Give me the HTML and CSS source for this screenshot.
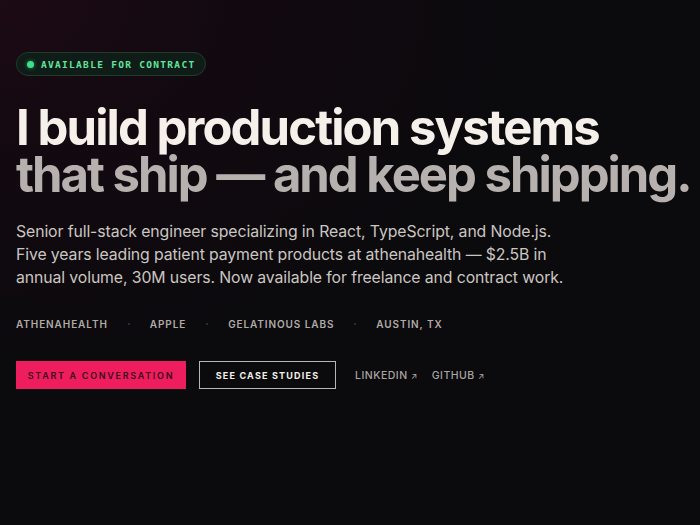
FILE: index.html
```html
<!DOCTYPE html>
<html lang="en">
<head>
<meta charset="utf-8">
<title>Hero</title>
<link rel="stylesheet" href="styles.css">
</head>
<body>
<main class="hero">
  <div class="badge"><span class="dot"></span><span class="badge-text">AVAILABLE FOR CONTRACT</span></div>
  <h1 class="title"><span class="l1">I build production systems</span><span class="l2">that ship — and keep shipping.</span></h1>
  <p class="lede">Senior full-stack engineer specializing in React, TypeScript, and Node.js. Five years leading patient payment products at athenahealth — $2.5B in annual volume, 30M users. Now available for freelance and contract work.</p>
  <ul class="facts">
    <li>ATHENAHEALTH</li>
    <li class="sep"></li>
    <li>APPLE</li>
    <li class="sep"></li>
    <li>GELATINOUS LABS</li>
    <li class="sep"></li>
    <li>AUSTIN, TX</li>
  </ul>
  <div class="actions">
    <a class="btn primary" href="#">START A CONVERSATION</a>
    <a class="btn outline" href="#">SEE CASE STUDIES</a>
    <a class="link" href="#">LINKEDIN <span class="arrow">↗</span></a>
    <a class="link" href="#">GITHUB <span class="arrow">↗</span></a>
  </div>
</main>
</body>
</html>
```
FILE: styles.css
```css
* { box-sizing: border-box; }
html, body { margin: 0; height: 100%; }
body {
  background: #0b0a0d;
  background-image: radial-gradient(ellipse 520px 360px at 0 0, #1c0a15 0%, rgba(23,9,18,0.6) 45%, rgba(11,10,13,0) 100%);
  color: #f4efe9;
  font-family: Inter, "Noto Sans", sans-serif;
  min-height: 525px;
}
.hero {
  padding: 52px 16px 0 16px;
  display: flex;
  flex-direction: column;
  align-items: flex-start;
}
.badge {
  display: flex;
  align-items: center;
  gap: 7px;
  height: 24px;
  padding: 0 10px 0 10px;
  border: 1px solid #1f3d2c;
  border-radius: 12px;
  background: #101c17;
}
.dot {
  width: 7px; height: 7px; border-radius: 50%;
  background: #3ee08a;
  box-shadow: 0 0 4px rgba(62,224,138,0.6);
}
.badge-text {
  font-family: "DejaVu Sans Mono", "Liberation Mono", monospace;
  font-weight: 700;
  font-size: 9.5px;
  letter-spacing: 1.3px;
  color: #62e59c;
}
.title {
  margin: 28px 0 0 0;
  font-weight: 700;
  font-size: 49px;
  line-height: 47px;
  letter-spacing: -1.9px;
  display: flex;
  flex-direction: column;
  white-space: nowrap;
}
.l1 { color: #f5f0ea; }
.l2 { color: #b6b1ae; letter-spacing: -2.0px; }
.lede {
  margin: 22px 0 0 0;
  max-width: 560px;
  font-size: 15.8px;
  line-height: 23px;
  color: #cbc6c1;
  letter-spacing: -0.1px;
}
.facts {
  list-style: none;
  margin: 29px 0 0 0;
  padding: 0;
  display: flex;
  align-items: center;
  gap: 20px;
  font-size: 10px;
  font-weight: 600;
  letter-spacing: 0.9px;
  color: #b0aba7;
}
.sep {
  width: 2px; height: 2px; border-radius: 50%;
  background: #3a3639;
}
.actions {
  margin-top: 31px;
  display: flex;
  align-items: center;
}
.btn {
  display: flex;
  align-items: center;
  justify-content: center;
  height: 28px;
  text-decoration: none;
  font-size: 9px;
  letter-spacing: 1.7px;
}
.primary {
  width: 170px;
  background: #ee1e5e;
  color: #3b0a1c;
  font-weight: 600;
}
.outline {
  width: 137px;
  margin-left: 13px;
  border: 1px solid #b9b5b2;
  color: #f4efe9;
  font-weight: 700;
  letter-spacing: 1.2px;
}
.link {
  color: #aaa5a1;
  text-decoration: none;
  font-size: 10.5px;
  font-weight: 500;
  letter-spacing: 0.5px;
  margin-left: 19px;
}
.link + .link { margin-left: 14px; }
.arrow { font-size: 8px; }
```
